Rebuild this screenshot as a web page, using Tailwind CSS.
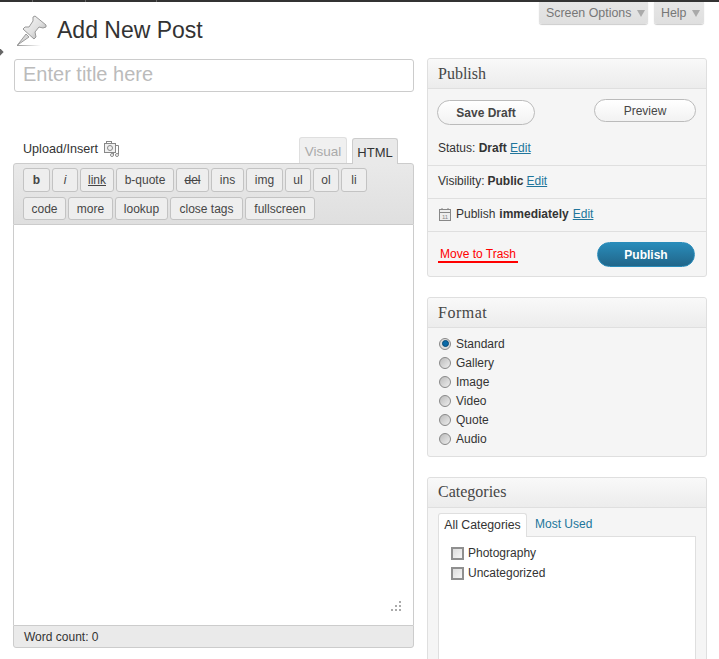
<!DOCTYPE html>
<html lang="en">
<head>
  <meta charset="UTF-8" />
  <title>Add New Post</title>
  <script src="https://cdn.jsdelivr.net/npm/@tailwindcss/browser@4"></script>
</head>
<body class="bg-white font-['Liberation_Sans',Arial,sans-serif] text-[12px] text-[#333] overflow-hidden">
  <div class="relative h-[659px] w-[719px] overflow-hidden">
    <!-- admin bar remnant -->
    <div class="h-[2px] bg-[#333] flex">
      <div class="w-[33px] border-r border-[#666]"></div>
      <div class="w-[53px] border-r border-[#666]"></div>
      <div class="w-[71px] border-r border-[#666]"></div>
    </div>
    <div class="absolute left-[-6px] top-[48px] w-[8px] h-[8px] rotate-45 bg-[#666]"></div>

    <div class="flex">
      <!-- left column -->
      <div class="w-[400px] ml-[14px] shrink-0">
        <div class="flex items-center h-[57px] pb-[1px]">
          <svg width="32" height="32" viewBox="0 0 32 32" class="ml-[1px] mt-[1px]">
            <defs>
              <linearGradient id="pinBody" x1="0" y1="0" x2="1" y2="1">
                <stop offset="0" stop-color="#f7f7f7" />
                <stop offset="0.55" stop-color="#e0e0e0" />
                <stop offset="1" stop-color="#a5a5a5" />
              </linearGradient>
              <linearGradient id="pinShadow" x1="0" y1="0" x2="1" y2="0">
                <stop offset="0" stop-color="#999" />
                <stop offset="1" stop-color="#fff" />
              </linearGradient>
            </defs>
            <rect x="2" y="30" width="24" height="1" fill="url(#pinShadow)" />
            <path d="M11 19 L14 22 L2.5 30 Z" fill="#d8d8d8" stroke="#888" stroke-width="0.8" stroke-linejoin="round" />
            <path d="M18 2 L20 1 L31 10 L31 12 L28 13 L24 12 L20 17 L21 22 L19 24 L8 14 L10 12 L14 12 L18 6 Z" fill="url(#pinBody)" stroke="#999" stroke-width="1" stroke-linejoin="round" />
          </svg>
          <h2 class="ml-[10px] text-[23px] leading-[30px] text-[#333]">Add New Post</h2>
        </div>

        <div class="h-[33px] border border-[#ccc] rounded-[3px] pl-[8px] pb-[3px] flex items-center text-[20px] text-[#bbb]">Enter title here</div>

        <div class="mt-[45px] flex justify-between items-end h-[26px] pl-[9px] pr-[16px]">
          <div class="flex items-center gap-[6px] h-[22px] mb-[3px] text-[12.6px]">
            <span>Upload/Insert</span>
            <svg width="16" height="16" viewBox="0 0 16 16" fill="none" stroke="#888" stroke-width="1">
              <rect x="0.5" y="2.5" width="11" height="9" fill="#f0f0f0" />
              <rect x="2.5" y="0.5" width="5" height="2" />
              <circle cx="6" cy="7" r="2.5" />
              <path d="M14.5 4.5 V13 M11.5 4.5 H14.5 M9.5 12 V14" />
              <circle cx="8" cy="14" r="1.5" />
              <circle cx="13" cy="14" r="1.5" />
            </svg>
          </div>
          <div class="flex gap-[5px] items-end">
            <div class="w-[48px] h-[26px] pt-[4px] border border-b-0 border-[#dfdfdf] rounded-t-[3px] bg-[#f0f0f0] text-[#aaa] text-[13.5px] flex items-center justify-center">Visual</div>
            <div class="relative z-10 w-[46px] h-[26px] pt-[2px] -mb-[1px] border border-b-0 border-[#ccc] rounded-t-[3px] bg-[#e9e9e9] text-[#333] text-[13px] flex items-center justify-center">HTML</div>
          </div>
        </div>

        <!-- quicktags toolbar -->
        <div class="-ml-[1px] border border-[#ccc] rounded-t-[3px] bg-gradient-to-b from-[#e9e9e9] to-[#dfdfdf] h-[62px] pl-[9px] pt-[4px]">
          <div class="flex gap-[2px] h-[24px] text-[12px] text-[#464646]">
            <span class="w-[27px] border border-[#c3c3c3] rounded-[3px] bg-[#eee] flex items-center justify-center font-bold">b</span>
            <span class="w-[26px] border border-[#c3c3c3] rounded-[3px] bg-[#eee] flex items-center justify-center italic">i</span>
            <span class="w-[34px] border border-[#c3c3c3] rounded-[3px] bg-[#eee] flex items-center justify-center underline">link</span>
            <span class="w-[58px] border border-[#c3c3c3] rounded-[3px] bg-[#eee] flex items-center justify-center">b-quote</span>
            <span class="w-[33px] border border-[#c3c3c3] rounded-[3px] bg-[#eee] flex items-center justify-center line-through">del</span>
            <span class="w-[33px] border border-[#c3c3c3] rounded-[3px] bg-[#eee] flex items-center justify-center">ins</span>
            <span class="w-[37px] border border-[#c3c3c3] rounded-[3px] bg-[#eee] flex items-center justify-center">img</span>
            <span class="w-[26px] border border-[#c3c3c3] rounded-[3px] bg-[#eee] flex items-center justify-center">ul</span>
            <span class="w-[26px] border border-[#c3c3c3] rounded-[3px] bg-[#eee] flex items-center justify-center">ol</span>
            <span class="w-[26px] border border-[#c3c3c3] rounded-[3px] bg-[#eee] flex items-center justify-center">li</span>
          </div>
          <div class="flex gap-[2px] h-[23px] mt-[5px] text-[12px] text-[#464646]">
            <span class="w-[43px] border border-[#c3c3c3] rounded-[3px] bg-[#eee] flex items-center justify-center">code</span>
            <span class="w-[45px] border border-[#c3c3c3] rounded-[3px] bg-[#eee] flex items-center justify-center">more</span>
            <span class="w-[53px] border border-[#c3c3c3] rounded-[3px] bg-[#eee] flex items-center justify-center">lookup</span>
            <span class="w-[73px] border border-[#c3c3c3] rounded-[3px] bg-[#eee] flex items-center justify-center">close tags</span>
            <span class="w-[70px] border border-[#c3c3c3] rounded-[3px] bg-[#eee] flex items-center justify-center">fullscreen</span>
          </div>
        </div>

        <!-- editor body -->
        <div class="relative -ml-[1px] h-[400px] border-x border-[#ccc] bg-white">
          <svg width="10" height="10" viewBox="0 0 10 10" class="absolute right-[12px] bottom-[14px]" fill="#aaa">
            <rect x="8" y="0" width="2" height="2" />
            <rect x="4" y="4" width="2" height="2" />
            <rect x="8" y="4" width="2" height="2" />
            <rect x="0" y="8" width="2" height="2" />
            <rect x="4" y="8" width="2" height="2" />
            <rect x="8" y="8" width="2" height="2" />
          </svg>
        </div>
        <div class="-ml-[1px] h-[23px] border border-[#ccc] rounded-b-[3px] bg-[#eaeaea] pl-[10px] flex items-center text-[12px] text-[#333]">Word count: 0</div>
      </div>

      <!-- right column -->
      <div class="w-[280px] ml-[13px] shrink-0 relative">
        <div class="absolute right-[3px] top-0 flex gap-[6px] text-[12.4px] text-[#777]">
          <div class="w-[109px] h-[22px] pl-[7px] bg-gradient-to-b from-[#e6e6e6] to-[#dfdfdf] rounded-b-[3px] shadow-[0_1px_1px_#ccc] flex items-center gap-[6px]">Screen Options <span class="w-0 h-0 border-x-[4px] border-x-transparent border-t-[7px] border-t-[#aaa]"></span></div>
          <div class="w-[50px] h-[22px] pl-[7px] bg-gradient-to-b from-[#e6e6e6] to-[#dfdfdf] rounded-b-[3px] shadow-[0_1px_1px_#ccc] flex items-center gap-[6px]">Help <span class="w-0 h-0 border-x-[4px] border-x-transparent border-t-[7px] border-t-[#aaa]"></span></div>
        </div>

        <!-- publish box -->
        <section class="mt-[56px] h-[219px] border border-[#dfdfdf] rounded-[3px] bg-[#f5f5f5] flex flex-col">
          <h3 class="h-[30px] shrink-0 border-b border-[#dfdfdf] bg-gradient-to-b from-[#f9f9f9] to-[#ececec] rounded-t-[3px] pl-[10px] flex items-center font-['Liberation_Serif',serif] text-[16px] text-[#464646]">Publish</h3>
          <div class="h-[36px] shrink-0 pl-[9px] pr-[10px] pt-[10px] flex justify-between items-start">
            <span class="w-[98px] h-[25px] mt-[1px] border border-[#bbb] rounded-full bg-gradient-to-b from-white to-[#f2f2f2] font-bold text-[#464646] flex items-center justify-center">Save Draft</span>
            <span class="w-[102px] h-[23px] border border-[#bbb] rounded-full bg-gradient-to-b from-white to-[#f2f2f2] text-[#464646] flex items-center justify-center">Preview</span>
          </div>
          <div class="h-[41px] shrink-0 border-b border-[#dfdfdf] pl-[10px] pt-[14px]">Status: <b>Draft</b> <a class="text-[#21759b] underline">Edit</a></div>
          <div class="h-[33px] shrink-0 border-b border-[#dfdfdf] pl-[10px] pb-[2px] flex items-center gap-[3px]"><span>Visibility:</span> <b>Public</b> <a class="text-[#21759b] underline">Edit</a></div>
          <div class="h-[33px] shrink-0 border-b border-[#dfdfdf] pl-[10px] pb-[2px] flex items-center gap-[4px]">
            <svg width="15" height="15" viewBox="0 0 15 15" fill="none" stroke="#888" class="-mr-[1px]">
              <rect x="1.5" y="2.5" width="11" height="11" fill="#eee" />
              <path d="M1.5 5.5 H12.5 M4 1 V3 M10 1 V3" />
              <text x="7" y="12" font-size="6" text-anchor="middle" fill="#888" stroke="none" font-family="Liberation Sans">11</text>
            </svg>
            <span>Publish</span> <b>immediately</b> <a class="text-[#21759b] underline">Edit</a>
          </div>
          <div class="flex-1 relative">
            <a class="absolute left-[10px] top-[10px] h-[21px] leading-[24px] px-[2px] border-b-2 border-[#f00] text-[#f00]">Move to Trash</a>
            <span class="absolute right-[11px] top-[10px] w-[98px] h-[25px] rounded-full border border-[#298cba] bg-gradient-to-b from-[#298cba] to-[#21668a] text-white font-bold flex items-center justify-center">Publish</span>
          </div>
        </section>

        <!-- format box -->
        <section class="mt-[20px] h-[160px] border border-[#dfdfdf] rounded-[3px] bg-[#f5f5f5]">
          <h3 class="h-[30px] border-b border-[#dfdfdf] bg-gradient-to-b from-[#f9f9f9] to-[#ececec] rounded-t-[3px] pl-[10px] flex items-center font-['Liberation_Serif',serif] text-[16px] tracking-[0.5px] text-[#464646]">Format</h3>
          <ul class="pl-[11px] pt-[6px] flex flex-col">
            <li class="h-[19px] flex items-center gap-[5px]"><span class="w-[12px] h-[12px] rounded-full border border-[#888] bg-[#ddd] flex items-center justify-center"><span class="w-[7px] h-[7px] rounded-full bg-[#0a6aa8] border border-[#074a75]"></span></span>Standard</li>
            <li class="h-[19px] flex items-center gap-[5px]"><span class="w-[12px] h-[12px] rounded-full border border-[#888] bg-gradient-to-br from-[#bbb] to-[#eee]"></span>Gallery</li>
            <li class="h-[19px] flex items-center gap-[5px]"><span class="w-[12px] h-[12px] rounded-full border border-[#888] bg-gradient-to-br from-[#bbb] to-[#eee]"></span>Image</li>
            <li class="h-[19px] flex items-center gap-[5px]"><span class="w-[12px] h-[12px] rounded-full border border-[#888] bg-gradient-to-br from-[#bbb] to-[#eee]"></span>Video</li>
            <li class="h-[19px] flex items-center gap-[5px]"><span class="w-[12px] h-[12px] rounded-full border border-[#888] bg-gradient-to-br from-[#bbb] to-[#eee]"></span>Quote</li>
            <li class="h-[19px] flex items-center gap-[5px]"><span class="w-[12px] h-[12px] rounded-full border border-[#888] bg-gradient-to-br from-[#bbb] to-[#eee]"></span>Audio</li>
          </ul>
        </section>

        <!-- categories box -->
        <section class="mt-[20px] h-[300px] border border-[#dfdfdf] rounded-[3px] bg-[#f5f5f5]">
          <h3 class="h-[30px] pb-[2px] border-b border-[#dfdfdf] bg-gradient-to-b from-[#f9f9f9] to-[#ececec] rounded-t-[3px] pl-[10px] flex items-center font-['Liberation_Serif',serif] text-[16px] text-[#464646]">Categories</h3>
          <div class="pl-[10px] pr-[10px] pt-[5px]">
            <div class="flex h-[23px]">
              <span class="relative z-10 w-[89px] h-[24px] pb-[1px] border border-b-0 border-[#dfdfdf] rounded-t-[3px] bg-white flex items-center justify-center text-[12.3px]">All Categories</span>
              <span class="ml-[8px] pb-[2px] flex items-center text-[#21759b]">Most Used</span>
            </div>
            <div class="h-[200px] border border-[#dfdfdf] bg-white pl-[12px] pt-[6px]">
              <label class="h-[20px] flex items-center gap-[4px]"><span class="w-[13px] h-[13px] border-2 border-[#8f8f8f] bg-gradient-to-br from-[#ddd] to-[#f6f6f6]"></span>Photography</label>
              <label class="h-[20px] flex items-center gap-[4px]"><span class="w-[13px] h-[13px] border-2 border-[#8f8f8f] bg-gradient-to-br from-[#ddd] to-[#f6f6f6]"></span>Uncategorized</label>
            </div>
          </div>
        </section>
      </div>
    </div>
  </div>
</body>
</html>
